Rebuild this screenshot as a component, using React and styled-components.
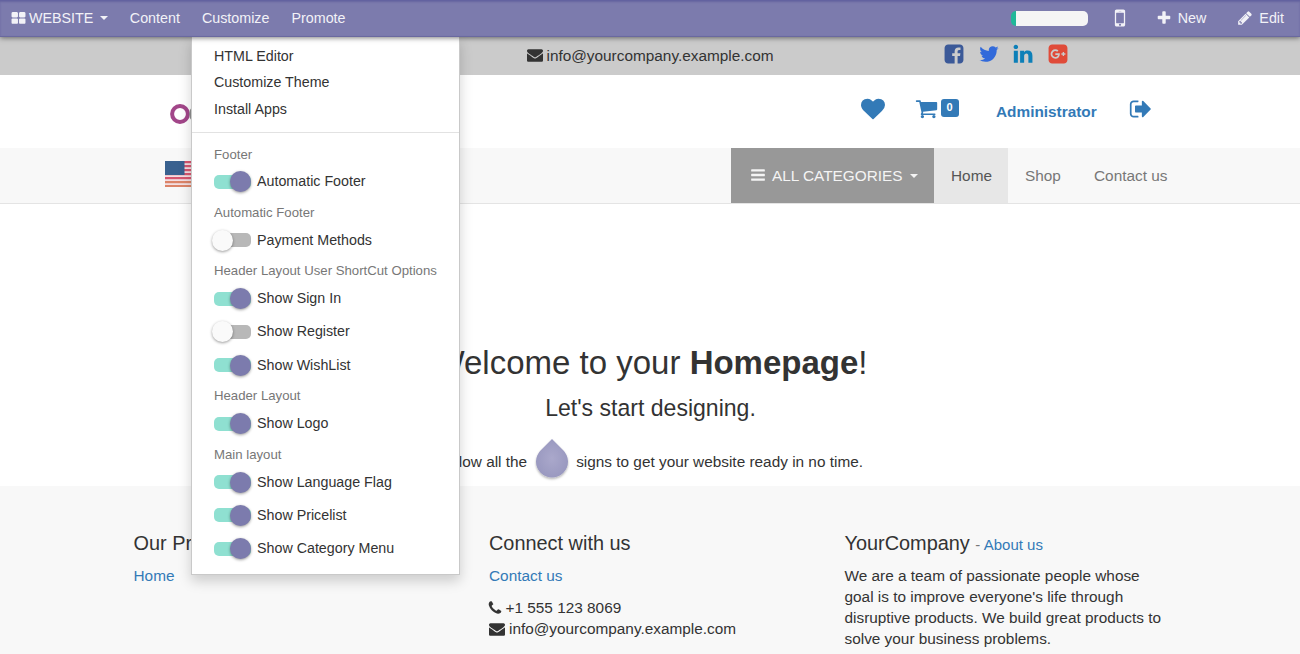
import React from "react";
import styled, { createGlobalStyle } from "styled-components";

const GlobalStyle = createGlobalStyle`
  * { box-sizing: border-box; }
  body {
    margin: 0;
    background: #fff;
    color: #333;
    font: 15.36px/21px "Liberation Sans", Arial, sans-serif;
    overflow: hidden;
  }
  a { color: #337ab7; text-decoration: none; }
`;

const PATHS = {
  thLarge:
    "M832 1024v384q0 52-38 90t-90 38h-512q-52 0-90-38t-38-90v-384q0-52 38-90t90-38h512q52 0 90 38t38 90zm0-768v384q0 52-38 90t-90 38h-512q-52 0-90-38t-38-90v-384q0-52 38-90t90-38h512q52 0 90 38t38 90zm896 768v384q0 52-38 90t-90 38h-512q-52 0-90-38t-38-90v-384q0-52 38-90t90-38h512q52 0 90 38t38 90zm0-768v384q0 52-38 90t-90 38h-512q-52 0-90-38t-38-90v-384q0-52 38-90t90-38h512q52 0 90 38t38 90z",
  plus:
    "M1600 736v192q0 40-28 68t-68 28h-416v416q0 40-28 68t-68 28h-192q-40 0-68-28t-28-68v-416h-416q-40 0-68-28t-28-68v-192q0-40 28-68t68-28h416v-416q0-40 28-68t68-28h192q40 0 68 28t28 68v416h416q40 0 68 28t28 68z",
  pencil:
    "M491 1536l91-91-235-235-91 91v107h128v128h107zm523-928q0-22-22-22-10 0-17 7l-542 542q-7 7-7 17 0 22 22 22 10 0 17-7l542-542q7-7 7-17zm-54-192l416 416-832 832h-416v-416zm683 96q0 53-37 90l-166 166-416-416 166-165q36-38 90-38 53 0 91 38l235 234q37 39 37 91z",
  mobile:
    "M976 1408q0-33-23.500-56.500t-56.500-23.500-56.500 23.500-23.500 56.500 23.500 56.500 56.500 23.500 56.500-23.500 23.500-56.500zm208-160v-704q0-13-9.500-22.500t-22.500-9.500h-512q-13 0-22.500 9.500t-9.500 22.500v704q0 13 9.500 22.500t22.500 9.500h512q13 0 22.500-9.500t9.500-22.500zm-192-848q0-16-16-16h-160q-16 0-16 16t16 16h160q16 0 16-16zm288-16v1024q0 52-38 90t-90 38h-512q-52 0-90-38t-38-90v-1024q0-52 38-90t90-38h512q52 0 90 38t38 90z",
  envelope:
    "M1792 710v794q0 66-47 113t-113 47h-1472q-66 0-113-47t-47-113v-794q44 49 101 87 362 246 497 345 57 42 92.500 65.500t94.500 48 110 24.500h2q51 0 110-24.500t94.500-48 92.500-65.500q170-123 498-345 57-39 100-87zm0-294q0 79-49 151t-122 123q-376 261-468 325-10 7-42.500 31t-54 38.500-52 32.500-57.500 27-50 9h-2q-23 0-50-9t-57.500-27-52-32.500-54-38.500-42.500-31q-91-64-262-182.500t-205-142.500q-62-42-117-115.500t-55-136.500q0-78 41.500-130t118.500-52h1472q65 0 112.500 47t47.500 113z",
  phone:
    "M1600 1240q0 27-10 70.500t-21 68.500q-21 50-122 106-94 51-186 51-27 0-53-3.500t-57.500-12.500-47-14.500-55.500-20.500-49-18q-98-35-175-83-127-79-264-216t-216-264q-48-77-83-175-3-9-18-49t-20.500-55.500-14.500-47-12.500-57.500-3.500-53q0-92 51-186 56-101 106-122 25-11 68.500-21t70.500-10q14 0 21 3 18 6 53 76 11 19 30 54t35 63.500 31 53.500q3 4 17.500 25t21.500 35.500 7 28.500q0 20-28.500 50t-62 55-62 53-28.500 46q0 9 5 22.500t8.500 20.500 14 24 11.500 19q76 137 174 235t235 174q2 1 19 11.500t24 14 20.500 8.500 22.500 5q18 0 46-28.500t53-62 55-62 50-28.500q14 0 28.500 7t35.500 21.500 25 17.500q25 15 53.500 31t63.500 35 54 30q70 35 76 53 3 7 3 21z",
  facebook:
    "M1376 128q119 0 203.500 84.500t84.500 203.500v960q0 119-84.500 203.500t-203.500 84.500h-188v-595h199l30-232h-229v-148q0-56 23.500-84t91.500-28l122-1v-207q-63-9-178-9-136 0-217.500 80t-81.500 226v171h-200v232h200v595h-532q-119 0-203.500-84.500t-84.500-203.500v-960q0-119 84.500-203.500t203.500-84.500h960z",
  twitter:
    "M1684 408q-67 98-162 167 1 14 1 42 0 130-38 259.500t-115.500 248.500-184.500 210.500-258 146-323 54.500q-271 0-496-145 35 4 78 4 225 0 401-138-105-2-188-64.500t-114-159.500q33 5 61 5 43 0 85-11-112-23-185.500-111.500t-73.500-205.500v-4q68 38 146 41-66-44-105-115t-39-154q0-88 44-163 121 149 294.500 238.500t371.500 99.500q-8-38-8-74 0-134 94.500-228.500t228.500-94.500q140 0 236 102 109-21 205-78-37 115-142 178 93-10 186-50z",
  linkedin:
    "M477 625v991h-330v-991h330zm21-306q1 73-50.500 122t-135.500 49h-2q-82 0-132-49t-50-122q0-74 51.500-122.500t134.500-48.500 133 48.500 51 122.500zm1166 729v568h-329v-530q0-105-40.500-164.500t-126.500-59.500q-63 0-105.500 34.500t-63.500 85.500q-11 30-11 81v553h-329q2-399 2-647t-1-296l-1-48h329v144h-2q20-32 41-56t56.500-52 87-43.500 114.500-15.500q171 0 275 113.500t104 332.500z",
  google:
    "M1045 905q0-26-6-64h-362v132h217q-3 24-16.500 50t-37.500 53-66.500 44.500-96.500 17.500q-99 0-169-71t-70-171 70-171 169-71q92 0 153 59l104-101q-108-100-257-100-160 0-272 112.500t-112 271.500 112 271.500 272 112.500q165 0 266.500-105t101.500-270zm345 46h109v-110h-109v-110h-110v110h-110v110h110v110h110v-110zm274-535v960q0 119-84.500 203.500t-203.500 84.500h-960q-119 0-203.500-84.500t-84.500-203.500v-960q0-119 84.500-203.500t203.500-84.500h960q119 0 203.500 84.500t84.500 203.500z",
  heart:
    "M896 1664q-26 0-44-18l-624-602q-10-8-27.500-26t-55.500-65.500-68-97.500-53.500-121-23.500-138q0-220 127-344t351-124q62 0 126.500 21.500t120 58 95.500 68.500 76 68q36-36 76-68t95.500-68.500 120-58 126.500-21.500q224 0 351 124t127 344q0 221-229 450l-623 600q-18 18-44 18z",
  cart:
    "M704 1536q0 52-38 90t-90 38-90-38-38-90 38-90 90-38 90 38 38 90zm896 0q0 52-38 90t-90 38-90-38-38-90 38-90 90-38 90 38 38 90zm128-1088v512q0 24-16.500 42.500t-40.500 21.500l-1044 122q13 60 13 70 0 16-24 64h920q26 0 45 19t19 45-19 45-45 19h-1024q-26 0-45-19t-19-45q0-11 8-31.500t16-36 21.500-40 15.500-29.500l-177-823h-204q-26 0-45-19t-19-45 19-45 45-19h256q16 0 28.500 6.500t19.500 15.500 13 24.500 8 26 5.500 29.500 4.500 26h1201q26 0 45 19t19 45z",
  signOut:
    "M704 1440q0 4 1 20t.5 26.500-3 23.500-10 19.500-20.500 6.500h-320q-119 0-203.500-84.500t-84.500-203.500v-704q0-119 84.500-203.500t203.500-84.500h320q13 0 22.500 9.500t9.500 22.500q0 4 1 20t.5 26.500-3 23.500-10 19.500-20.500 6.500h-320q-66 0-113 47t-47 113v704q0 66 47 113t113 47h312l11.500 1 11.500 3 8 5.500 7 9 2 13.500zm928-544q0 26-19 45l-544 544q-19 19-45 19t-45-19-19-45v-288h-448q-26 0-45-19t-19-45v-384q0-26 19-45t45-19h448v-288q0-26 19-45t45-19 45 19l544 544q19 19 19 45z",
  bars:
    "M1664 1344v128q0 26-19 45t-45 19h-1408q-26 0-45-19t-19-45v-128q0-26 19-45t45-19h1408q26 0 45 19t19 45zm0-512v128q0 26-19 45t-45 19h-1408q-26 0-45-19t-19-45v-128q0-26 19-45t45-19h1408q26 0 45 19t19 45zm0-512v128q0 26-19 45t-45 19h-1408q-26 0-45-19t-19-45v-128q0-26 19-45t45-19h1408q26 0 45 19t19 45z",
};

const IconSvg = styled.svg`
  display: block;
  flex: none;
  width: ${(p) => p.$size}px;
  height: ${(p) => p.$size}px;
  margin: ${(p) => p.$margin || 0};
  fill: ${(p) => p.$color || "currentColor"};
`;

const Icon = ({ name, size = 15, color, margin }) => (
  <IconSvg viewBox="0 0 1792 1792" $size={size} $color={color} $margin={margin} aria-hidden="true">
    <path d={PATHS[name]} />
  </IconSvg>
);

const Page = styled.div`
  position: relative;
  width: 1300px;
  height: 654px;
  overflow: hidden;
`;

const AdminBar = styled.nav`
  position: relative;
  z-index: 3;
  display: flex;
  align-items: center;
  height: 37px;
  padding: 0 16px 1px 11px;
  background: #7c7bad;
  border-top: 1px solid #6362a0;
  border-bottom: 1px solid #6a699f;
  box-shadow: inset 0 1px 2px #6665a0, 0 1px 5px rgba(0, 0, 0, 0.5);
  color: #f2f2f7;
  font-size: 14.300px;
`;

const BarItem = styled.span`
  display: flex;
  align-items: center;
  white-space: nowrap;
  margin-left: ${(p) => p.$gap || 0}px;
`;

const Spacer = styled.div`
  flex: 1;
`;

const Caret = styled.i`
  width: 0;
  height: 0;
  margin-left: ${(p) => p.$gap}px;
  border: 4px solid transparent;
  border-top-color: currentColor;
  border-bottom: 0;
`;

const Progress = styled.div`
  width: 77px;
  height: 15px;
  border-radius: 5px;
  background: linear-gradient(90deg, #21b799 5px, #f5f5f5 5px);
`;

const ContactStrip = styled.div`
  display: flex;
  align-items: center;
  height: 38px;
  padding-left: 526.500px;
  background: #cbcbcb;
`;

const Email = styled.span`
  display: flex;
  align-items: center;
  width: 247.500px;
  margin-top: -2px;
  gap: 4px;
`;

const Socials = styled.div`
  display: flex;
  gap: 12.500px;
  margin: -5px 0 0 169px;
`;

const Header = styled.header`
  display: flex;
  align-items: center;
  height: 73px;
  padding-left: 169px;
  color: #337ab7;
`;

const Logo = styled.svg`
  width: 60px;
  height: 24px;
  margin: 3px 632px 0 0;
`;

const Badge = styled.span`
  width: 18px;
  height: 18px;
  margin: -8px 37.500px 0 3px;
  border-radius: 3px;
  background: #337ab7;
  color: #fff;
  font: bold 11px/17px "Liberation Sans", Arial, sans-serif;
  text-align: center;
`;

const MainNav = styled.div`
  display: flex;
  height: 56px;
  padding-left: 165px;
  background: #f8f8f8;
  border-bottom: 1px solid #e4e4e4;
`;

const Flag = styled.svg`
  width: 50px;
  height: 26px;
  margin: 13px 516px 0 0;
`;

const NavLink = styled.a`
  display: flex;
  align-items: center;
  width: ${(p) => p.$width}px;
  height: 55px;
  padding-left: ${(p) => p.$inset || 17}px;
  background: ${(p) => (p.$kind === "category" ? "#989898" : p.$kind === "active" ? "#e7e7e7" : "transparent")};
  color: ${(p) => (p.$kind === "category" ? "#f4f4f4" : p.$kind === "active" ? "#555" : "#777")};
  white-space: nowrap;
`;

const Hero = styled.main`
  height: 282px;
  padding-top: 139px;
  text-align: center;
`;

const Title = styled.h1`
  margin: 0;
  padding-left: 1px;
  font-size: 33px;
  line-height: 40px;
  font-weight: 400;
`;

const Subtitle = styled.h2`
  margin: 15px 0 0;
  padding-left: 1px;
  font-size: 23.050px;
  line-height: 20px;
  font-weight: 400;
`;

const Hint = styled.div`
  display: flex;
  align-items: center;
  justify-content: flex-end;
  height: 42px;
  width: 863px;
  margin-top: 22px;
  white-space: nowrap;
`;

const Drop = styled.svg`
  width: 40px;
  height: 46px;
  margin: -3px 4.500px 0 4.500px;
  overflow: visible;
`;

const Footer = styled.footer`
  display: grid;
  grid-template-columns: 355.500px 355.500px 330px;
  height: 168px;
  padding: 44px 0 0 133.500px;
  background: #f8f8f8;
`;

const FooterTitle = styled.h4`
  margin: 0 0 9px;
  height: 26px;
  font-size: 19.900px;
  line-height: 26px;
  font-weight: 400;
  small { font-size: 15px; color: #777; }
`;

const FooterLine = styled.div`
  display: flex;
  align-items: center;
  gap: 4px;
  height: 21px;
  margin-top: ${(p) => p.$top || 0}px;
  white-space: nowrap;
`;

const Menu = styled.div`
  position: absolute;
  z-index: 2;
  top: 37px;
  left: 191px;
  width: 269px;
  height: 538px;
  padding-top: 6px;
  background: #fff;
  border: 1px solid #c9c9c9;
  border-top: 0;
  box-shadow: 0 6px 12px rgba(0, 0, 0, 0.18);
  font-size: 14.270px;
`;

const MenuAction = styled.div`
  height: 26.400px;
  padding-left: 22px;
  line-height: 26px;
`;

const MenuHeading = styled.div`
  height: 25px;
  padding: 2px 0 0 22px;
  color: #777;
  font-size: 13.200px;
  line-height: 20px;
`;

const Divider = styled.hr`
  height: 1px;
  margin: 10px 0 9.600px;
  border: 0;
  background: #e2e2e2;
`;

const ToggleRow = styled.div`
  display: flex;
  align-items: center;
  height: 33.350px;
  padding: 0 0 5px 22px;
`;

const Track = styled.span`
  display: flex;
  align-items: center;
  justify-content: ${(p) => (p.$on ? "flex-end" : "flex-start")};
  width: 37px;
  height: 14px;
  margin-right: 6px;
  border-radius: 5px;
  background: ${(p) => (p.$on ? "#8fe0d1" : "#b8b8b8")};
`;

const Knob = styled.span`
  flex: none;
  width: 21px;
  height: 21px;
  margin-left: -2px;
  border-radius: 50%;
  background: ${(p) => (p.$on ? "#7c7bad" : "#fafafa")};
  box-shadow: 0 1px 3px rgba(0, 0, 0, 0.4);
`;

const GROUPS = [
  ["Footer", [["Automatic Footer", true]]],
  ["Automatic Footer", [["Payment Methods", false]]],
  ["Header Layout User ShortCut Options", [["Show Sign In", true], ["Show Register", false], ["Show WishList", true]]],
  ["Header Layout", [["Show Logo", true]]],
  ["Main layout", [["Show Language Flag", true], ["Show Pricelist", true], ["Show Category Menu", true]]],
];

function CustomizeMenu() {
  return (
    <Menu>
      {["HTML Editor", "Customize Theme", "Install Apps"].map((t) => (
        <MenuAction key={t}>{t}</MenuAction>
      ))}
      <Divider />
      {GROUPS.map(([heading, items]) => (
        <React.Fragment key={heading}>
          <MenuHeading>{heading}</MenuHeading>
          {items.map(([label, on]) => (
            <ToggleRow key={label}>
              <Track $on={on}><Knob $on={on} /></Track>
              {label}
            </ToggleRow>
          ))}
        </React.Fragment>
      ))}
    </Menu>
  );
}

export default function App() {
  return (
    <Page>
      <GlobalStyle />
      <AdminBar>
        <BarItem><Icon name="thLarge" size={15} margin="0 3px 0 0" />WEBSITE<Caret $gap={7} /></BarItem>
        <BarItem $gap={21.5}>Content</BarItem>
        <BarItem $gap={22}>Customize</BarItem>
        <BarItem $gap={22}>Promote</BarItem>
        <Spacer />
        <Progress />
        <BarItem $gap={20}><Icon name="mobile" size={24} /></BarItem>
        <BarItem $gap={24}><Icon name="plus" size={16} margin="0 6px 0 0" />New</BarItem>
        <BarItem $gap={31}><Icon name="pencil" size={16} margin="0 6px 0 0" />Edit</BarItem>
      </AdminBar>
      <ContactStrip>
        <Email><Icon name="envelope" size={16} />info@yourcompany.example.com</Email>
        <Socials>
          <Icon name="facebook" size={22} color="#3b5998" />
          <Icon name="twitter" size={22} color="#326ada" />
          <Icon name="linkedin" size={22} color="#0c7fb8" />
          <Icon name="google" size={22} color="#e04b39" />
        </Socials>
      </ContactStrip>
      <Header>
        <Logo viewBox="0 0 60 24" fill="none" stroke="#a24689" strokeWidth="4">
          <circle cx="11" cy="13" r="7.900" />
          <circle cx="30" cy="13" r="7.900" stroke="#8f8f8f" />
          <circle cx="49" cy="13" r="7.900" stroke="#8f8f8f" />
        </Logo>
        <Icon name="heart" size={24} margin="-6px 29.5px 0 0" />
        <Icon name="cart" size={23} margin="-6px 0 0 0" />
        <Badge>0</Badge>
        <b>Administrator</b>
        <Icon name="signOut" size={24} margin="-6px 0 0 32px" />
      </Header>
      <MainNav>
        <Flag viewBox="0 0 50 26">
          <rect width="50" height="26" fill="#f3dfe2" />
          {[0, 4, 8, 12, 16, 20, 24].map((y) => (
            <rect key={y} y={y} width="50" height="2.200" fill={y > 19 ? "#dc8468" : "#d6566f"} />
          ))}
          <rect width="19.500" height="14" fill="#39618f" />
        </Flag>
        <NavLink $width={203} $kind="category" $inset={19}>
          <Icon name="bars" size={16} margin="-2px 6px 0 0" />ALL CATEGORIES<Caret $gap={7} />
        </NavLink>
        <NavLink $width={74} $kind="active">Home</NavLink>
        <NavLink $width={69}>Shop</NavLink>
        <NavLink $width={108}>Contact us</NavLink>
      </MainNav>
      <Hero>
        <Title>Welcome to your <b>Homepage</b>!</Title>
        <Subtitle>Let's start designing.</Subtitle>
        <Hint>
          Follow all the
          <Drop viewBox="0 0 40 46">
            <defs>
              <radialGradient id="drop"><stop offset="0" stopColor="#aaa8cb" /><stop offset="1" stopColor="#9a99c0" /></radialGradient>
              <filter id="shade" x="-20%" y="-20%" width="140%" height="150%">
                <feDropShadow dx="0" dy="1.500" stdDeviation="1.200" floodOpacity=".3" />
              </filter>
            </defs>
            <path d="M20 2L31 13A16 16 0 1 1 9 13Z" fill="url(#drop)" filter="url(#shade)" />
          </Drop>
          signs to get your website ready in no time.
        </Hint>
      </Hero>
      <Footer>
        <section>
          <FooterTitle>Our Products</FooterTitle>
          <FooterLine><a>Home</a></FooterLine>
        </section>
        <section>
          <FooterTitle>Connect with us</FooterTitle>
          <FooterLine><a>Contact us</a></FooterLine>
          <FooterLine $top={11}><Icon name="phone" size={16} margin="0 -1.500px 0 -2px" />+1 555 123 8069</FooterLine>
          <FooterLine><Icon name="envelope" size={16} />info@yourcompany.example.com</FooterLine>
        </section>
        <section>
          <FooterTitle>YourCompany <small>- <a>About us</a></small></FooterTitle>
          <FooterLine>We are a team of passionate people whose</FooterLine>
          <FooterLine>goal is to improve everyone's life through</FooterLine>
          <FooterLine>disruptive products. We build great products to</FooterLine>
          <FooterLine>solve your business problems.</FooterLine>
        </section>
      </Footer>
      <CustomizeMenu />
    </Page>
  );
}
